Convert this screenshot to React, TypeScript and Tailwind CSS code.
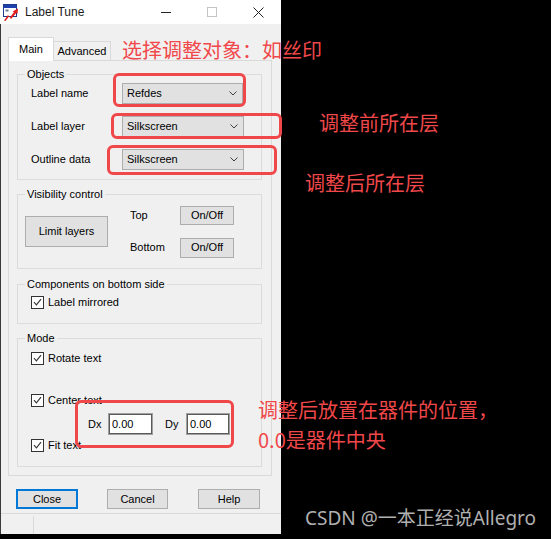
import React from "react";

function Chevron() {
  return (
    <svg width="8" height="5" viewBox="0 0 8 5" className="shrink-0">
      <path d="M0.5 0.5 L4 4 L7.5 0.5" stroke="#404040" strokeWidth="1" fill="none" />
    </svg>
  );
}

function Combo({ value, w = 121 }: { value: string; w?: number }) {
  return (
    <div
      className="h-[21px] bg-[#e1e1e1] border border-[#adadad] flex items-center pl-[4px] pr-[5px] box-border"
      style={{ width: w }}
    >
      <span className="flex-1 leading-[13px]">{value}</span>
      <Chevron />
    </div>
  );
}

function Btn({ label, className = "" }: { label: string; className?: string }) {
  return (
    <div
      className={
        "bg-[#e1e1e1] border border-[#adadad] flex items-center justify-center box-border leading-[13px] " +
        className
      }
    >
      {label}
    </div>
  );
}

function Check({ label }: { label: string }) {
  return (
    <div className="flex items-center h-[13px]">
      <span className="w-[13px] h-[13px] bg-white border border-[#333333] flex items-center justify-center box-border shrink-0">
        <svg width="9" height="9" viewBox="0 0 9 9">
          <path d="M1 4.2 L3.4 6.8 L8 1.2" stroke="#333333" strokeWidth="1.1" fill="none" />
        </svg>
      </span>
      <span className="ml-[4px] leading-[13px] whitespace-nowrap">{label}</span>
    </div>
  );
}

function Group({
  title,
  className = "",
  children,
}: {
  title: string;
  className?: string;
  children?: React.ReactNode;
}) {
  return (
    <div className={"relative w-[245px] border border-[#dcdcdc] box-border " + className}>
      <span className="absolute left-[7px] -top-[7px] px-[2px] bg-[#f0f0f0] leading-[13px] whitespace-nowrap">
        {title}
      </span>
      {children}
    </div>
  );
}

function Field({ value, w }: { value: string; w: number }) {
  return (
    <div
      className="h-[22px] bg-white border border-[#a0a0a0] shadow-[inset_0_0_0_1px_#5a5a5a] flex items-center pl-[3px] box-border"
      style={{ width: w }}
    >
      <span className="leading-[13px]">{value}</span>
    </div>
  );
}

function AppIcon() {
  return (
    <svg width="16" height="17" viewBox="0 0 16 17">
      <rect x="0.5" y="0.5" width="13" height="12" fill="#ffffff" stroke="#1e3a8a" />
      <rect x="1" y="1" width="12" height="3" fill="#1e40af" />
      <rect x="2.5" y="5.5" width="3" height="2" fill="#6b7a99" />
      <path d="M1 16.5 L5 11 L7 13.5 L11 8 L9.5 7.5 L15 4.5 L14.5 10 L13.5 8.8 L8 15 L6 12.5 L2.5 17 Z" fill="#e11d1d" />
    </svg>
  );
}

export default function App() {
  const red = "text-[#f0484a]";
  return (
    <div className="relative w-[551px] h-[539px] bg-black overflow-hidden font-['Liberation_Sans',Arial,sans-serif] text-[11px] text-black">
      {/* Dialog */}
      <div className="w-[281px] h-[534px] bg-[#f0f0f0] flex flex-col">
        {/* Title bar */}
        <div className="h-[24px] bg-white flex items-center shrink-0">
          <div className="ml-[3px] mt-[1px]">
            <AppIcon />
          </div>
          <span className="ml-[6px] text-[12px] leading-[14px] text-[#1a1a1a]">Label Tune</span>
          <div className="ml-auto flex h-full">
            <div className="w-[46px] h-full flex items-center justify-center">
              <div className="w-[10px] h-px bg-[#222]" />
            </div>
            <div className="w-[46px] h-full flex items-center justify-center">
              <div className="w-[10px] h-[10px] border border-[#c4c4c4]" />
            </div>
            <div className="w-[46px] h-full flex items-center justify-center">
              <svg width="11" height="11" viewBox="0 0 11 11">
                <path d="M0.5 0.5 L10.5 10.5 M10.5 0.5 L0.5 10.5" stroke="#222" strokeWidth="1" />
              </svg>
            </div>
          </div>
        </div>

        {/* Body */}
        <div className="flex-1 flex flex-col border-l border-[#3a3a3a]">
          {/* Tabs */}
          <div className="mt-[13px] ml-[7px] h-[24px] flex items-end relative z-10">
            <div className="w-[46px] h-[24px] bg-white border-t border-l border-r border-[#d9d9d9] flex items-center justify-center box-border pb-[1px]">
              <span className="leading-[13px]">Main</span>
            </div>
            <div className="w-[57px] h-[19px] mb-[1px] bg-[#f0f0f0] border-t border-r border-[#d9d9d9] flex items-center justify-center box-border">
              <span className="leading-[13px]">Advanced</span>
            </div>
          </div>

          {/* Panel */}
          <div className="-mt-[1px] ml-[7px] w-[264px] border border-[#d9d9d9] bg-[#f0f0f0] pl-[8px] pb-[8px] box-border">
            <Group title="Objects" className="mt-[13px] h-[106px]">
              <div className="pt-[8px] pl-[13px] flex flex-col gap-[12px]">
                <div className="flex items-center h-[21px]">
                  <span className="w-[91px]">Label name</span>
                  <Combo value="Refdes" w={121} />
                </div>
                <div className="flex items-center h-[21px]">
                  <span className="w-[91px]">Label layer</span>
                  <Combo value="Silkscreen" w={122} />
                </div>
                <div className="flex items-center h-[21px]">
                  <span className="w-[91px]">Outline data</span>
                  <Combo value="Silkscreen" w={122} />
                </div>
              </div>
            </Group>

            <Group title="Visibility control" className="mt-[14px] h-[75px]">
              <div className="pt-[11px] pl-[7px] flex items-center">
                <Btn label="Limit layers" className="w-[83px] h-[31px]" />
                <div className="ml-[22px] flex flex-col gap-[13px]">
                  <div className="flex items-center h-[19px]">
                    <span className="w-[50px]">Top</span>
                    <Btn label="On/Off" className="w-[54px] h-[19px]" />
                  </div>
                  <div className="flex items-center h-[19px]">
                    <span className="w-[50px]">Bottom</span>
                    <Btn label="On/Off" className="w-[54px] h-[20px]" />
                  </div>
                </div>
              </div>
            </Group>

            <Group title="Components on bottom side" className="mt-[15px] h-[40px]">
              <div className="pt-[11px] pl-[13px]">
                <Check label="Label mirrored" />
              </div>
            </Group>

            <Group title="Mode" className="mt-[14px] h-[129px]">
              <div className="pt-[13px] pl-[13px] flex flex-col">
                <Check label="Rotate text" />
                <div className="mt-[29px]">
                  <Check label="Center text" />
                </div>
                <div className="mt-[6px] ml-[57px] h-[22px] flex items-center">
                  <span className="w-[20px]">Dx</span>
                  <Field value="0.00" w={45} />
                  <span className="ml-[12px] w-[21px]">Dy</span>
                  <Field value="0.00" w={44} />
                </div>
                <div className="mt-[4px]">
                  <Check label="Fit text" />
                </div>
              </div>
            </Group>
          </div>

          {/* Buttons */}
          <div className="mt-[13px] ml-[15px] h-[20px] flex">
            <div className="w-[62px] h-[20px] bg-[#e1e1e1] border-2 border-[#0078d7] flex items-center justify-center box-border leading-[13px]">
              Close
            </div>
            <Btn label="Cancel" className="ml-[29px] w-[61px] h-[20px]" />
            <Btn label="Help" className="ml-[30px] w-[62px] h-[20px]" />
          </div>

          {/* Status bar */}
          <div className="mt-[4px] flex-1 border-t border-[#d9d9d9] flex">
            <div className="w-[33px] border-r border-[#d9d9d9] mt-[2px]" />
            <div className="flex-1" />
          </div>
        </div>
      </div>

      {/* Annotation rectangles */}
      <div className="absolute left-[113px] top-[73px] w-[133px] h-[34px] border-[3px] border-[#f0484a] rounded-[6px]" />
      <div className="absolute left-[111px] top-[113px] w-[171px] h-[26px] border-[3px] border-[#f0484a] rounded-[6px]" />
      <div className="absolute left-[107px] top-[145px] w-[170px] h-[30px] border-[3px] border-[#f0484a] rounded-[6px]" />
      <div className="absolute left-[75px] top-[400px] w-[159px] h-[48px] border-[3px] border-[#f0484a] rounded-[6px]" />

      {/* Annotation texts */}
      <div className={"absolute left-[122px] top-[39px] text-[20px] leading-[22px] whitespace-nowrap font-['Noto_Sans_CJK_SC',sans-serif] " + red}>
        选择调整对象：如丝印
      </div>
      <div className={"absolute left-[319px] top-[112px] text-[20px] leading-[22px] whitespace-nowrap font-['Noto_Sans_CJK_SC',sans-serif] " + red}>
        调整前所在层
      </div>
      <div className={"absolute left-[305px] top-[172px] text-[20px] leading-[22px] whitespace-nowrap font-['Noto_Sans_CJK_SC',sans-serif] " + red}>
        调整后所在层
      </div>
      <div className={"absolute left-[258px] top-[399px] text-[20px] leading-[22px] whitespace-nowrap font-['Noto_Sans_CJK_SC',sans-serif] " + red}>
        调整后放置在器件的位置，
      </div>
      <div className={"absolute left-[258px] top-[429px] text-[20px] leading-[22px] whitespace-nowrap font-['Noto_Sans_CJK_SC',sans-serif] " + red}>
        0.0是器件中央
      </div>
      <div className="absolute left-[305px] top-[506px] text-[19px] leading-[24px] whitespace-nowrap text-[#b0b0b0] font-['Noto_Sans','Noto_Sans_CJK_SC',sans-serif]">
        CSDN @一本正经说Allegro
      </div>
    </div>
  );
}
